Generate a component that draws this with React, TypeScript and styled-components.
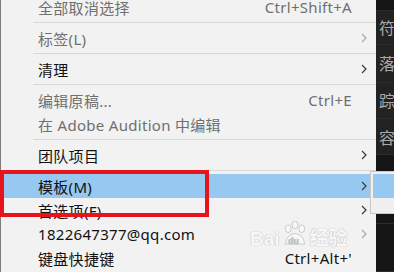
import styled, { createGlobalStyle } from 'styled-components';

const GlobalStyle = createGlobalStyle`
    html, body {
        margin: 0;
        padding: 0;
        width: 394px;
        height: 272px;
        overflow: hidden;
        background: #1e1e1e;
    }
`;

const Screen = styled.div`
    position: relative;
    display: flex;
    width: 394px;
    height: 272px;
    overflow: hidden;
    font-family: 'Noto Sans', 'Noto Sans CJK SC', sans-serif;
    font-size: 15px;
`;

const Menu = styled.div`
    width: 375px;
    margin-top: -5px;
    background: #f2f2f2;
    border-left: 1px solid #7c7c7c;
    display: flex;
    flex-direction: column;
`;

const Row = styled.div<{ $disabled?: boolean; $active?: boolean }>`
    height: 24px;
    display: grid;
    grid-template-columns: 1fr auto 24px;
    align-items: center;
    padding-left: 37px;
    color: ${(p) => (p.$disabled ? '#6f6f6f' : '#111')};
    background: ${(p) => (p.$active ? '#97c8f2' : 'transparent')};
    letter-spacing: 0.3px;
    white-space: nowrap;
`;

const Shortcut = styled.span`
    text-align: right;
`;

const Chevron = styled.svg<{ $disabled?: boolean }>`
    justify-self: center;
    width: 6px;
    height: 10px;
    stroke: ${(p) => (p.$disabled ? '#a8a8a8' : '#3a3a3a')};
`;

const Separator = styled.div`
    height: 7px;
    margin-left: 32px;
    display: flex;
    align-items: center;
    &::after {
        content: '';
        flex: 1;
        height: 1px;
        background: #d8d8d8;
    }
`;

const Panel = styled.div`
    flex: 1;
    display: flex;
    flex-direction: column;
    background: #1c1c1c;
    color: #a9a9a9;
    font-size: 16px;
    overflow: hidden;
`;

const PanelCell = styled.div<{ $h: number; $dark?: boolean }>`
    height: ${(p) => p.$h}px;
    display: flex;
    align-items: center;
    padding-left: 3px;
    background: ${(p) => (p.$dark ? '#161616' : '#222')};
    border-bottom: 1px solid #2c2c2c;
`;

const Submenu = styled.div`
    position: absolute;
    left: 370px;
    top: 171px;
    width: 30px;
    height: 43px;
    background: #f0f0f0;
    border: 1px solid #c8c8c8;
    padding-top: 2px;
    box-sizing: border-box;
`;

const SubHighlight = styled.div`
    height: 24px;
    margin-left: 2px;
    background: #97c8f2;
`;

const RedBox = styled.div`
    position: absolute;
    left: 0;
    top: 170px;
    width: 209px;
    height: 47px;
    box-sizing: border-box;
    border: 4px solid #e8141c;
`;

const Watermark = styled.div`
    position: absolute;
    left: 250px;
    top: 221px;
    display: flex;
    align-items: flex-end;
    gap: 2px;
    opacity: 0.5;
    font-family: 'Liberation Sans', 'Noto Sans CJK SC', sans-serif;
    font-weight: bold;
    font-size: 19px;
    color: #fff;
    text-shadow: 0 0 1px #888, 0 0 1px #888;
    pointer-events: none;
`;

const WaterText = styled.span`
    line-height: 19px;
`;

const Paw = styled.svg`
    width: 26px;
    height: 27px;
`;

const chevron = (disabled?: boolean) => (
    <Chevron $disabled={disabled} viewBox="0 0 6 10" fill="none" strokeWidth="1.2">
        <path d="M1 1 L5 5 L1 9" />
    </Chevron>
);

const App = () => {
    return (
        <Screen>
            <GlobalStyle />
            <Menu>
                <Row $disabled>
                    <span>全部取消选择</span>
                    <Shortcut>Ctrl+Shift+A</Shortcut>
                    <span />
                </Row>
                <Separator />
                <Row $disabled>
                    <span>标签(L)</span>
                    <span />
                    {chevron(true)}
                </Row>
                <Separator />
                <Row>
                    <span>清理</span>
                    <span />
                    {chevron()}
                </Row>
                <Separator />
                <Row $disabled>
                    <span>编辑原稿...</span>
                    <Shortcut>Ctrl+E</Shortcut>
                    <span />
                </Row>
                <Row $disabled>
                    <span>在 Adobe Audition 中编辑</span>
                    <span />
                    <span />
                </Row>
                <Separator />
                <Row>
                    <span>团队项目</span>
                    <span />
                    {chevron()}
                </Row>
                <Separator />
                <Row $active>
                    <span>模板(M)</span>
                    <span />
                    {chevron()}
                </Row>
                <Row>
                    <span>首选项(F)</span>
                    <span />
                    {chevron()}
                </Row>
                <Row>
                    <span>1822647377@qq.com</span>
                    <span />
                    {chevron(true)}
                </Row>
                <Row>
                    <span>键盘快捷键</span>
                    <Shortcut>Ctrl+Alt+'</Shortcut>
                    <span />
                </Row>
            </Menu>
            <Panel>
                <PanelCell $h={10} $dark />
                <PanelCell $h={34}>符</PanelCell>
                <PanelCell $h={38}>落</PanelCell>
                <PanelCell $h={36}>踪</PanelCell>
                <PanelCell $h={36}>容</PanelCell>
                <PanelCell $h={70} $dark />
                <PanelCell $h={48} $dark />
            </Panel>
            <Submenu>
                <SubHighlight />
            </Submenu>
            <RedBox />
            <Watermark>
                <WaterText>Bai</WaterText>
                <Paw viewBox="0 0 26 28" fill="#fff" stroke="#888" strokeWidth="0.8">
                    <ellipse cx="6" cy="8" rx="3" ry="4" />
                    <ellipse cx="13" cy="4" rx="3" ry="4" />
                    <ellipse cx="20" cy="8" rx="3" ry="4" />
                    <path d="M3 24 Q4 14 13 13 Q22 14 23 24 Z" />
                    <text x="6" y="24" fontSize="9" fill="#999" stroke="none">du</text>
                </Paw>
                <WaterText>经验</WaterText>
            </Watermark>
        </Screen>
    );
};

export default App;
